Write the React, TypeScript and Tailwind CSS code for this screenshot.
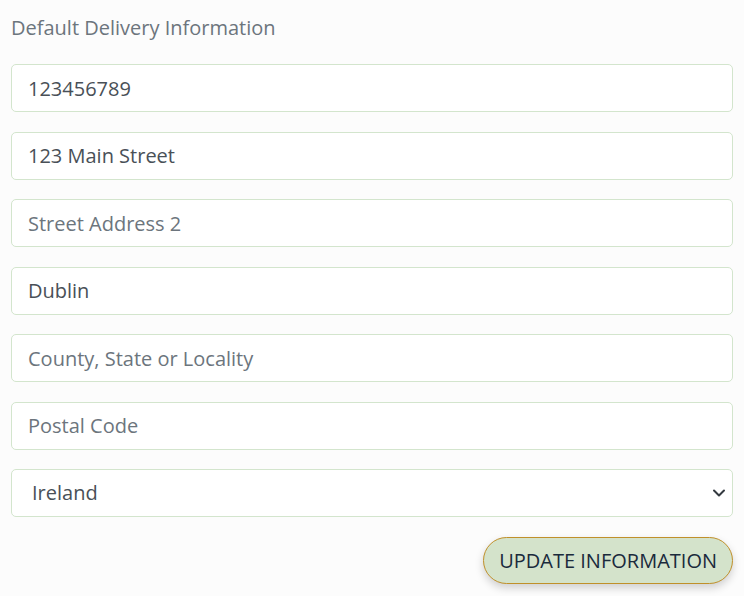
import React from "react";

const inputCls =
  "block w-full h-[48px] rounded-[5px] border border-[#d3e5cd] bg-white px-4 text-[20px] leading-[30px] text-[#495057] placeholder:text-[#6c757d] outline-none";

export default function App() {
  return (
    <div
      className="min-h-[596px] w-[744px] bg-[#fcfcfc] px-[11px] pt-[14px]"
      style={{ fontFamily: '"Open Sans", sans-serif' }}
    >
      <h2 className="text-[20px] leading-[28px] font-normal text-[#6c757d] mb-[22px]">
        Default Delivery Information
      </h2>
      <div className="flex flex-col gap-[19.5px]">
        <input className={inputCls} defaultValue="123456789" />
        <input className={inputCls} defaultValue="123 Main Street" />
        <input className={inputCls} placeholder="Street Address 2" />
        <input className={inputCls} defaultValue="Dublin" />
        <input className={inputCls} placeholder="County, State or Locality" />
        <input className={inputCls} placeholder="Postal Code" />
        <div className="relative">
          <select
            className="block w-full h-[48px] appearance-none rounded-[5px] border border-[#d3e5cd] bg-white pl-[20px] pr-10 text-[20px] leading-[30px] text-[#495057] outline-none"
            defaultValue="Ireland"
          >
            <option>Ireland</option>
          </select>
          <svg
            className="pointer-events-none absolute right-[7px] top-[18px]"
            width="14"
            height="12"
            viewBox="0 0 14 12"
          >
            <path d="M2 3.5 L7 8.5 L12 3.5" fill="none" stroke="#343a40" strokeWidth="2" strokeLinecap="round" strokeLinejoin="round" />
          </svg>
        </div>
      </div>
      <div className="mt-[20px] flex justify-end">
        <button className="h-[47px] rounded-full border border-[#c0902a] bg-[#d4e3cb] px-[15px] text-[20px] leading-[30px] text-[#1a2a3c] shadow-[0_4px_8px_rgba(0,0,0,0.18)]">
          UPDATE INFORMATION
        </button>
      </div>
    </div>
  );
}
